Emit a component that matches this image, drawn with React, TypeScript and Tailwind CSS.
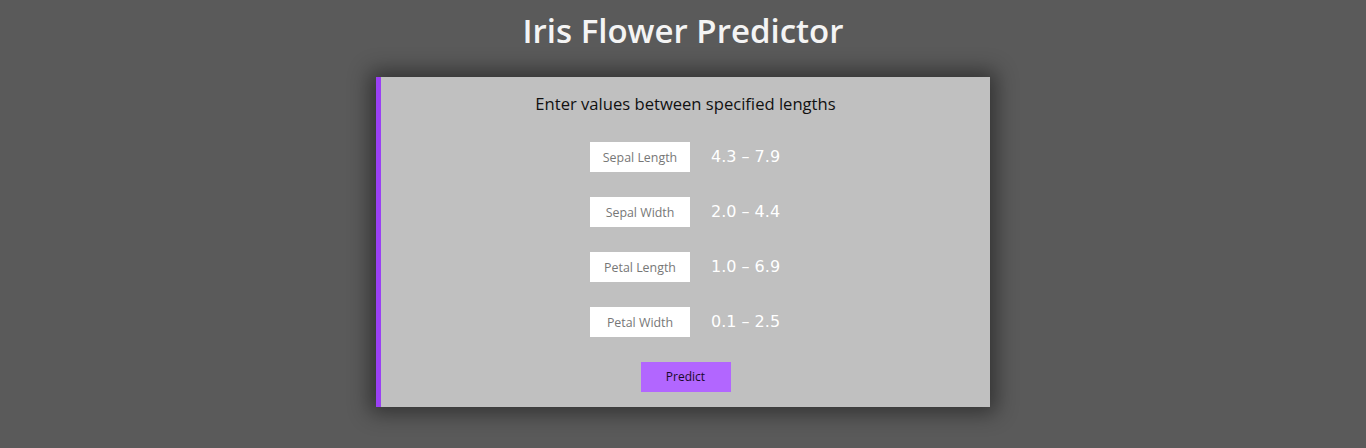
import React from "react";

const rows = [
  { label: "Sepal Length", range: "4.3 – 7.9" },
  { label: "Sepal Width", range: "2.0 – 4.4" },
  { label: "Petal Length", range: "1.0 – 6.9" },
  { label: "Petal Width", range: "0.1 – 2.5" },
];

export default function App() {
  return (
    <div className="w-full h-[448px] bg-[#5a5a5a] flex flex-col items-center overflow-hidden font-['DejaVu_Sans',sans-serif]">
      <h1 className="text-[33px] leading-[40px] font-semibold text-[#f4f4f4] mt-[11px] font-['Open_Sans',sans-serif]">
        Iris Flower Predictor
      </h1>
      <div className="mt-[26px] w-[614px] h-[330px] bg-[#c0c0c0] border-l-[5px] border-[#9a40f5] shadow-[0_0_20px_6px_rgba(0,0,0,0.45)] flex flex-col items-center">
        <p className="mt-[16px] text-[16.6px] leading-[22px] text-[#111] font-['Open_Sans',sans-serif]">
          Enter values between specified lengths
        </p>
        <div className="mt-[27px] flex flex-col gap-[25px]">
          {rows.map((r) => (
            <div key={r.label} className="flex items-center gap-[21px]">
              <input
                placeholder={r.label}
                className="w-[100px] h-[30px] bg-white text-center text-[12.4px] placeholder:text-[#777] outline-none font-['Open_Sans',sans-serif]"
              />
              <span className="w-[70px] text-[16px] text-white">{r.range}</span>
            </div>
          ))}
        </div>
        <button className="mt-[25px] w-[90px] h-[30px] bg-[#b266ff] text-[12px] text-[#1a0a2a] font-['Open_Sans',sans-serif]">
          Predict
        </button>
      </div>
    </div>
  );
}
